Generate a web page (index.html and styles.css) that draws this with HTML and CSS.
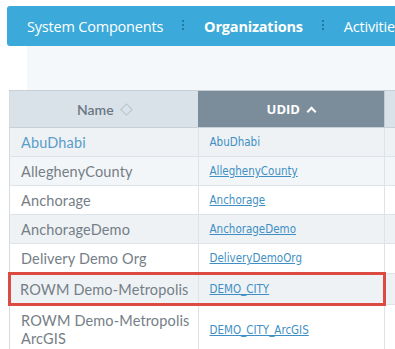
FILE: index.html
```html
<!DOCTYPE html>
<html lang="en">
<head>
  <meta charset="UTF-8">
  <title>Organizations</title>
  <link rel="stylesheet" href="styles.css">
</head>
<body>
  <div class="nav">
    <a class="nav-item">System Components</a>
    <span class="sep"></span>
    <a class="nav-item active">Organizations</a>
    <span class="sep"></span>
    <a class="nav-item">Activities</a>
  </div>

  <div class="toolbar"></div>

  <table class="grid">
    <thead>
      <tr>
        <th class="col-name">Name <span class="sort-both"></span></th>
        <th class="col-udid sorted">UDID <span class="caret"></span></th>
        <th class="col-rest"></th>
      </tr>
    </thead>
    <tbody>
      <tr class="alt">
        <td class="name link">AbuDhabi</td>
        <td class="udid"><a>AbuDhabi</a></td>
        <td></td>
      </tr>
      <tr class="alt2">
        <td class="name">AlleghenyCounty</td>
        <td class="udid"><a class="u">AlleghenyCounty</a></td>
        <td></td>
      </tr>
      <tr>
        <td class="name">Anchorage</td>
        <td class="udid"><a class="u">Anchorage</a></td>
        <td></td>
      </tr>
      <tr class="alt">
        <td class="name">AnchorageDemo</td>
        <td class="udid"><a class="u">AnchorageDemo</a></td>
        <td></td>
      </tr>
      <tr>
        <td class="name">Delivery Demo Org</td>
        <td class="udid"><a class="u">DeliveryDemoOrg</a></td>
        <td></td>
      </tr>
      <tr class="alt picked">
        <td class="name">ROWM Demo-Metropolis</td>
        <td class="udid"><a class="u">DEMO_CITY</a></td>
        <td></td>
      </tr>
      <tr class="tall">
        <td class="name">ROWM Demo-Metropolis<br>ArcGIS</td>
        <td class="udid"><a class="u">DEMO_CITY_ArcGIS</a></td>
        <td></td>
      </tr>
    </tbody>
  </table>
</body>
</html>
```
FILE: styles.css
```css
body {
  margin: 0;
  padding: 6px 0 0 7px;
  background: #fff;
  font-family: "Open Sans", sans-serif;
  overflow: hidden;
  width: 395px;
}

.nav {
  display: flex;
  align-items: center;
  height: 40px;
  width: 380px;
  overflow: hidden;
  background-color: #3ba9d9;
  border-radius: 3px 0 0 3px;
  padding-left: 20px;
  white-space: nowrap;
}

.nav-item {
  color: #fff;
  font-size: 14.5px;
  letter-spacing: -0.2px;
}

.nav-item.active {
  font-weight: bold;
}

.sep {
  flex: none;
  width: 2px;
  height: 12px;
  margin: 0 20px 0 19px;
  background: repeating-linear-gradient(#2678a3 0 2px, transparent 2px 4px);
}

.toolbar {
  height: 44px;
  margin-left: 20px;
  background-color: #f5f8fa;
}

.grid {
  border-collapse: collapse;
  margin-left: 1px;
  width: 420px;
  table-layout: fixed;
  border-left: 1px solid #d4dbe1;
}

.grid th {
  height: 36px;
  padding: 0;
  background-color: #d9e2e9;
  font-family: Lato, sans-serif;
  font-size: 14px;
  font-weight: 600;
  color: #6b7782;
  border-top: 1px solid #c7d0d7;
  border-bottom: 1px solid #c7d0d7;
}

.grid th.col-name { width: 188px; }
.grid th.col-udid { width: 186px; }

.grid th.sorted {
  background-color: #7b8d9a;
  color: #fff;
  font-family: "Open Sans", sans-serif;
  font-weight: bold;
  font-size: 13px;
  border-right: 1px solid #c3ccd3;
}

.sort-both {
  display: inline-block;
  width: 7px;
  height: 7px;
  border: 1.3px solid #b8c2ca;
  transform: rotate(45deg);
  margin-left: 5px;
  vertical-align: 1px;
}

.caret {
  display: inline-block;
  width: 5px;
  height: 5px;
  border-top: 2.5px solid #fff;
  border-left: 2.5px solid #fff;
  transform: rotate(45deg);
  margin-left: 5px;
  vertical-align: -1px;
}

.grid td {
  height: 28px;
  padding: 0 0 0 11px;
  border-bottom: 1px solid #dde3e8;
  border-right: 1px solid #dde3e8;
  background-color: #fff;
}

.grid tr.alt td { background-color: #eef2f5; }
.grid tr.alt2 td { background-color: #f3f6f8; }

.grid td.name {
  font-family: Lato, sans-serif;
  font-size: 14.5px;
  letter-spacing: 0.15px;
  color: #757e86;
}

.grid td.name.link { color: #5a9dca; }

.grid td.udid {
  padding-left: 11px;
  font-family: "DejaVu Sans Condensed", sans-serif;
  font-size: 11.5px;
}

.udid a { color: #3f8fc4; }
.udid a.u { text-decoration: underline; }

.grid tr.tall td {
  height: 44px;
  line-height: 18px;
  padding-top: 2px;
}

.grid tr.picked td {
  border-top: 3px solid #dc4b42;
  border-bottom: 3px solid #dc4b42;
}

.grid tr.picked td:first-child { border-left: 3px solid #dc4b42; padding-left: 9px; }
.grid tr.picked td:nth-child(2) { border-right: 3px solid #dc4b42; }
.grid tr.picked td:last-child { border-top-color: #dde3e8; border-bottom-color: #dde3e8; border-top-width: 1px; border-bottom-width: 1px; }
```
